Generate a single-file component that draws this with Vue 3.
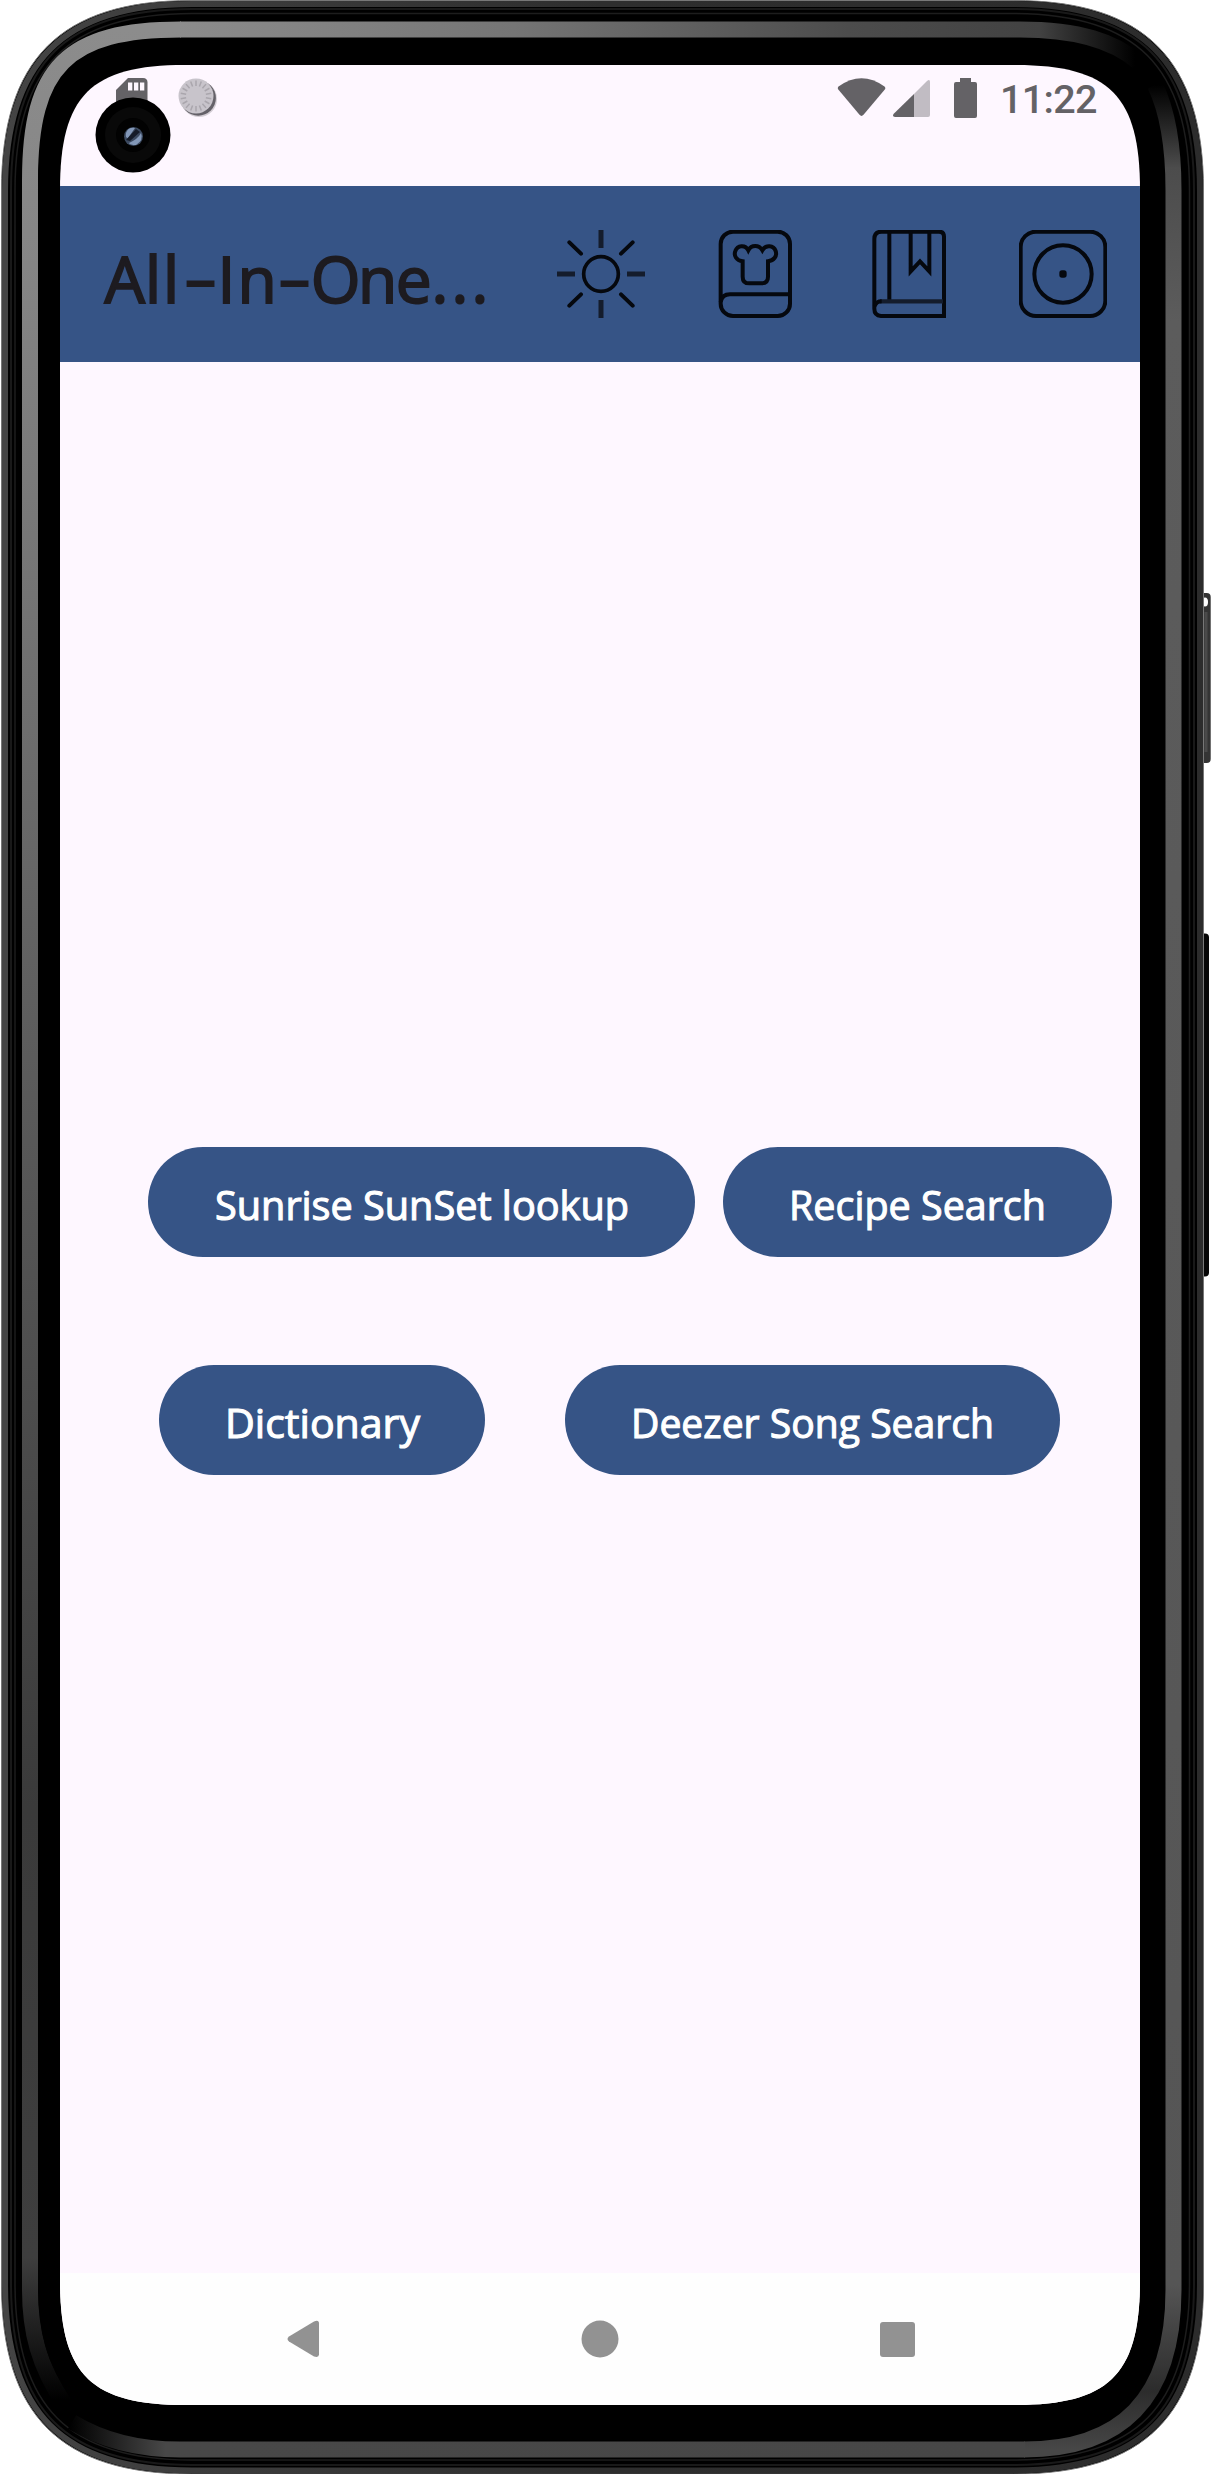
<script setup>
// Rounded rectangle with continuous (superellipse-like) corners
function squircle(l, t, r, b, e, k) {
  const h = e * (1 - k)
  return `M${l} ${t + e}C${l} ${t + h} ${l + h} ${t} ${l + e} ${t}H${r - e}` +
    `C${r - h} ${t} ${r} ${t + h} ${r} ${t + e}V${b - e}` +
    `C${r} ${b - h} ${r - h} ${b} ${r - e} ${b}H${l + e}` +
    `C${l + h} ${b} ${l} ${b - h} ${l} ${b - e}Z`
}
const shell = squircle(1.5, 0.5, 1203.5, 2474, 190, 0.69)
const rim = squircle(5, 4, 1200, 2470.5, 187, 0.69)
const lineA = squircle(11, 9, 1194, 2465, 181, 0.7)
const lineB = squircle(15, 13.5, 1189.5, 2460, 177, 0.7)
const glass = squircle(60, 65, 1140, 2405, 125, 0.755)

const ticks = Array.from({ length: 18 }, (_, i) => i * 20)
const rows = [
  [
    { label: 'Sunrise SunSet lookup', width: 547, text: 414 },
    { label: 'Recipe Search', width: 389, text: 257 },
  ],
  [
    { label: 'Dictionary', width: 326, text: 195 },
    { label: 'Deezer Song Search', width: 495, text: 363 },
  ],
]
</script>

<template>
  <div class="phone">
    <svg class="frame" width="1211" height="2474" viewBox="0 0 1211 2474">
      <defs>
        <linearGradient id="gl" gradientUnits="userSpaceOnUse" x1="0" y1="29" x2="0" y2="2400">
          <stop offset="0" stop-color="#8c8c8c" /><stop offset=".1" stop-color="#858585" />
          <stop offset=".45" stop-color="#5a5a5a" /><stop offset=".75" stop-color="#3a3a3a" />
          <stop offset=".94" stop-color="#3e3e3e" /><stop offset="1" stop-color="#000" />
        </linearGradient>
        <linearGradient id="gt" gradientUnits="userSpaceOnUse" x1="179" y1="0" x2="1135" y2="0">
          <stop offset="0" stop-color="#8c8c8c" /><stop offset=".35" stop-color="#757575" />
          <stop offset=".7" stop-color="#4c4c4c" /><stop offset=".9" stop-color="#424242" />
          <stop offset="1" stop-color="#000" />
        </linearGradient>
        <linearGradient id="gr" gradientUnits="userSpaceOnUse" x1="0" y1="85" x2="0" y2="2450">
          <stop offset="0" stop-color="#000" /><stop offset=".035" stop-color="#4c4c4c" />
          <stop offset=".1" stop-color="#5c5c5c" /><stop offset=".93" stop-color="#555" />
          <stop offset=".975" stop-color="#2c2c2c" /><stop offset="1" stop-color="#474747" />
        </linearGradient>
        <linearGradient id="gb" gradientUnits="userSpaceOnUse" x1="70" y1="0" x2="1025" y2="0">
          <stop offset="0" stop-color="#000" /><stop offset=".1" stop-color="#484848" />
          <stop offset="1" stop-color="#474747" />
        </linearGradient>
        <linearGradient id="gs" x1="0" y1="0" x2="1" y2="0">
          <stop offset="0" stop-color="#444" /><stop offset=".5" stop-color="#2e2e2e" />
          <stop offset="1" stop-color="#2c2c2c" />
        </linearGradient>
      </defs>
      <rect x="1198" y="593" width="12.7" height="170" rx="4" fill="#343434" />
      <rect x="1204.5" y="612" width="3" height="140" fill="#4a4a4a" />
      <ellipse cx="1205" cy="602" rx="3" ry="4.5" fill="#fff" />
      <rect x="1198" y="933.500" width="11" height="343" rx="4" fill="#060606" />
      <path :d="shell" fill="#000" stroke="#777" stroke-width="1" />
      <path :d="rim" fill="none" stroke="url(#gs)" stroke-width="6" />
      <path :d="lineA" fill="none" stroke="#191919" stroke-width="2" />
      <path :d="lineB" fill="none" stroke="#1d1d1d" stroke-width="1.500" />
      <g fill="none" stroke-width="16">
        <path stroke="url(#gl)" d="M65 2405C38 2365 30 2330 30 2290V180C30 67 67 29.500 181 29.500" />
        <path stroke="url(#gt)" d="M180 29.500H1020C1080 29.500 1115 42 1138 62" />
        <path stroke="url(#gr)" d="M1155 85C1168 112 1173.500 150 1173.500 190V2290C1173.500 2400 1120 2449.500 1024 2449.500" />
        <path stroke="url(#gb)" d="M1025 2449.500H180C140 2449.500 105 2442 72 2422" />
      </g>
      <path :d="glass" fill="#000" stroke="#000" stroke-width="44" />
    </svg>

    <main class="screen">
      <header class="status">
        <svg class="notice" width="110" height="60" viewBox="110 70 110 60">
          <path fill="#646266" d="M128 78H143Q147.500 78 147.500 82.500V112H116V90Z" />
          <path fill="#fef7ff" d="M128 82.500h4.300v8h-4.300zM134 82.500h4.300v8h-4.300zM140 82.500h4.300v8h-4.300z" />
          <circle cx="199" cy="99" r="18" fill="#bbb7bd" opacity=".65" />
          <circle cx="198.200" cy="98" r="17.700" fill="#646168" />
          <circle cx="196" cy="96" r="17.500" fill="#c8c4cb" />
          <path v-for="a in ticks" :key="a" d="M196 80.500V86" stroke="#aaa6ad" stroke-width="1.500" :transform="`rotate(${a} 196 96)`" />
        </svg>
        <svg class="signals" width="145" height="46" viewBox="835 75 145 46" fill="#646266">
          <path d="M838.500 86.500Q861.500 70 884.500 86.500Q886 88 884.800 89.500L863.500 114.800Q861.500 117 859.500 114.800L838.300 89.500Q837.200 88 838.500 86.500Z" />
          <path fill="#c1bcc3" d="M914 94L927 81Q930 78.800 930 82V115Q930 117 928 117H914Z" />
          <path d="M914 94V117H895Q891.500 116.500 894 113.500Z" />
          <path d="M960 78H971V82H975Q977 82 977 84V116Q977 118 975 118H956Q954 118 954 116V84Q954 82 956 82H960Z" />
        </svg>
        <span class="time">11:22</span>
        <svg class="camera" width="76" height="76" viewBox="-38 -38 76 76">
          <circle r="37.500" fill="#000" />
          <circle r="28" fill="#090909" />
          <circle r="17" fill="#020202" />
          <circle cx=".5" cy="1.500" r="9.500" fill="#3c4a60" />
          <path d="M-7-2Q-5-8 2-7L-5 3Q-8 3-7-2ZM8-2Q11 5 3 10Q-3 10-4 8Q5 4 8-2Z" fill="#8398b8" />
          <path d="M3-6L7-3L-3 6L-7 5Z" fill="#151b28" />
        </svg>
      </header>

      <nav class="appbar">
        <svg class="title" width="410" height="90" viewBox="0 0 410 90">
          <text x="0.500 41 59" y="74">All</text>
          <text x="80" y="71.500" textLength="33" lengthAdjust="spacingAndGlyphs">-</text>
          <text x="113.500 133.400" y="74">In</text>
          <text x="174" y="71.500" textLength="33" lengthAdjust="spacingAndGlyphs">-</text>
          <text x="206.800 254 291.800 327.500 347.500 367.500" y="74">One...</text>
        </svg>
        <svg class="tool" viewBox="0 0 264 264">
          <circle cx="132" cy="132" r="52" stroke-width="11" />
          <path stroke="#141c2c" stroke-width="15" d="M132 0V54M132 210V264M0 132H54M210 132H264" />
          <path stroke-width="12" stroke-linecap="round" d="M37 37L72 71M227 37L192 71M37 227L72 193M227 227L192 193" />
        </svg>
        <svg class="tool" viewBox="0 0 264 264">
          <rect x="29" y="5" width="208" height="253" rx="37" />
          <path d="M29 216Q33 193 57 193H237" />
          <path d="M95 94C75 92 68 76 73 63C79 45 103 43 112 61C121 44 144 44 154 61C164 43 188 46 194 63C199 78 189 92 171 94V140Q171 160 151 160H115Q95 160 95 140Z" />
        </svg>
        <svg class="tool" viewBox="0 0 264 264">
          <path d="M48 258Q28 256 28 236V27Q28 5 50 5H222Q237 5 237 20V258Z" />
          <path d="M73 5V214M137 5V124L165 94L193 124V5" />
          <path stroke="#141c2c" stroke-width="13" d="M45 214H234" />
          <path d="M29 228Q34 214 50 214" />
        </svg>
        <svg class="tool" viewBox="0 0 264 264">
          <rect x="5" y="5" width="254" height="253" rx="46" />
          <circle cx="132" cy="132" r="86" />
          <rect x="127" y="127" width="10" height="10" rx="2" fill="#000" />
        </svg>
      </nav>

      <section class="content">
        <div v-for="(row, i) in rows" :key="i" class="row" :class="`row-${i}`">
          <button v-for="b in row" :key="b.label" class="pill" :style="{ width: b.width + 'px' }">
            <svg :width="b.text" height="60">
              <text x="0" y="43" :textLength="b.text" lengthAdjust="spacingAndGlyphs">{{ b.label }}</text>
            </svg>
          </button>
        </div>
      </section>

      <footer class="navbar">
        <svg width="38" height="42" viewBox="0 0 38 42"><path d="M5 18.500L30 3.500Q35 1.500 35 5.500V36.500Q35 40 30 38.500L5 23.500Q2 21 5 18.500Z" /></svg>
        <svg width="38" height="38" viewBox="0 0 38 38"><circle cx="19" cy="19" r="18.500" /></svg>
        <svg class="recents" width="35" height="35" viewBox="0 0 35 35"><rect width="35" height="35" rx="3" /></svg>
      </footer>
    </main>
  </div>
</template>

<style>
body { margin: 0; background: #fff; }
</style>

<style scoped>
.phone {
  position: relative;
  box-sizing: border-box;
  width: 1211px;
  height: 2474px;
  padding: 65px 71px 69px 60px;
  overflow: hidden;
  background: #fff;
}
.frame { position: absolute; inset: 0; }
.screen {
  position: relative;
  display: flex;
  flex-direction: column;
  width: 1080px;
  height: 2340px;
  background: #fef7ff;
  clip-path: path("M0 125C0 30.600 30.600 0 125 0H955C1049.400 0 1080 30.600 1080 125V2215C1080 2309.400 1049.400 2340 955 2340H125C30.600 2340 0 2309.400 0 2215Z");
}
.status {
  position: relative;
  display: flex;
  align-items: flex-start;
  box-sizing: border-box;
  height: 121px;
  padding-left: 50px;
}
.notice { margin-top: 5px; }
.signals { margin: 10px 20px 0 615px; }
.time {
  margin-top: 11px;
  font: 500 39.500px/48px Roboto, sans-serif;
  letter-spacing: -0.700px;
  color: #646266;
}
.camera { position: absolute; left: 34.500px; top: 31.500px; }
.appbar {
  display: flex;
  align-items: center;
  height: 176px;
  padding-left: 44px;
  background: #365486;
}
.title {
  flex: none;
  margin-right: 43px;
  overflow: visible;
  font: 400 64px "Open Sans", "Noto Sans", sans-serif;
  fill: #1d1b20;
  stroke: #1d1b20;
  stroke-width: 1.900px;
}
.tool {
  flex: none;
  width: 88px;
  height: 88px;
  margin-right: 66px;
  fill: none;
  stroke: #05080e;
  stroke-width: 12;
}
.content {
  display: flex;
  flex-direction: column;
  gap: 108px;
  height: 1126px;
  padding-top: 785px;
}
.row { display: flex; }
.row-0 { gap: 28px; padding-left: 88px; }
.row-1 { gap: 80px; padding-left: 99px; }
.pill {
  display: flex;
  flex: none;
  align-items: center;
  justify-content: center;
  height: 110px;
  padding: 0;
  border: 0;
  border-radius: 55px;
  background: #365486;
}
.pill svg {
  margin-top: 10px;
  overflow: visible;
  font: 400 40.5px "Open Sans", "Noto Sans", sans-serif;
  fill: #fff;
  stroke: #fff;
  stroke-width: 1.100px;
}
.navbar {
  display: flex;
  align-items: center;
  gap: 258.500px;
  height: 132px;
  padding-left: 224px;
  background: #fefefe;
  fill: #929292;
}
.recents { margin-left: 3px; }
</style>
